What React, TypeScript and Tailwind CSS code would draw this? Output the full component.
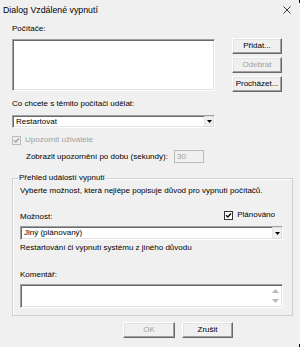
import React from "react";

const sunken =
  "border border-t-[#a0a0a0] border-l-[#a0a0a0] border-b-white border-r-white shadow-[inset_1px_1px_0_#696969,inset_-1px_-1px_0_#e3e3e3] bg-white";

const Button = ({
  label,
  disabled,
  className = "",
}: {
  label: string;
  disabled?: boolean;
  className?: string;
}) => (
  <div
    className={`flex items-center justify-center h-[16px] border border-t-white border-l-white border-b-[#696969] border-r-[#696969] shadow-[inset_-1px_-1px_0_#a0a0a0,inset_1px_1px_0_#e3e3e3] bg-[#f0f0f0] ${
      disabled ? "text-[#a0a0a0]" : "text-black"
    } ${className}`}
  >
    {label}
  </div>
);

const Check = ({ disabled }: { disabled?: boolean }) => (
  <div
    className={`flex items-center justify-center w-[9px] h-[9px] border ${
      disabled ? "border-[#bcbcbc] bg-[#f0f0f0]" : "border-[#333] bg-white"
    }`}
  >
    <svg width="7" height="7" viewBox="0 0 7 7">
      <path
        d="M1 3.2 L2.8 5 L6 1.5"
        fill="none"
        stroke={disabled ? "#a0a0a0" : "#000"}
        strokeWidth="1.3"
      />
    </svg>
  </div>
);

const Select = ({ value, className = "" }: { value: string; className?: string }) => (
  <div className={`flex items-center ${sunken} ${className}`}>
    <span className="flex-1 pl-[3px]">{value}</span>
    <div className="flex items-center justify-center w-[10px] h-full border-l border-l-[#e3e3e3] bg-[#f0f0f0] border border-[#dcdcdc]">
      <svg width="5" height="3" viewBox="0 0 5 3">
        <path d="M0 0 H5 L2.5 3 Z" fill="#000" />
      </svg>
    </div>
  </div>
);

export default function App() {
  return (
    <div className="relative w-[300px] h-[347px] bg-[#f0f0f0] text-[8px] leading-[10px] text-black font-['Liberation_Sans',Arial,sans-serif] overflow-hidden">
      <div className="flex h-[20px] items-center justify-between pl-[3px] pr-[9px]">
        <span className="text-[8.8px]">Dialog Vzdálené vypnutí</span>
        <svg width="8" height="8" viewBox="0 0 8 8">
          <path d="M0.5 0.5 L7.5 7.5 M7.5 0.5 L0.5 7.5" stroke="#222" strokeWidth="0.9" />
        </svg>
      </div>

      <div className="px-[12px]">
        <div className="mt-[4px]">Počítače:</div>
        <div className="mt-[5px] flex items-start">
          <div className={`w-[203px] h-[52px] ${sunken}`} />
          <div className="ml-[17px] -mt-[1px] flex flex-col gap-[3px]">
            <Button label="Přidat..." className="w-[50px]" />
            <Button label="Odebrat" disabled className="w-[50px]" />
            <Button label="Procházet..." className="w-[50px]" />
          </div>
        </div>

        <div className="mt-[7px]">Co chcete s těmito počítači udělat:</div>
        <Select value="Restartovat" className="mt-[6px] w-[203px] h-[13px]" />

        <div className="mt-[7px] flex items-center h-[10px] text-[#a0a0a0]">
          <Check disabled />
          <span className="ml-[4px]">Upozornit uživatele</span>
        </div>
        <div className="mt-[5px] flex items-center h-[13px] pl-[14px]">
          <span className="w-[148px]">Zobrazit upozornění po dobu (sekundy):</span>
          <div className="flex items-center w-[30px] h-[13px] pl-[2px] border border-[#bcbcbc] bg-[#f0f0f0] text-[#a0a0a0]">
            30
          </div>
        </div>

        <div className="relative mt-[15px] w-[281px] h-[138px] border border-[#d0d0d0] shadow-[inset_1px_1px_0_white] pl-[7px] pr-[9px]">
          <span className="absolute -top-[6px] left-[5px] bg-[#f0f0f0] px-[1px]">
            Přehled událostí vypnutí
          </span>
          <div className="mt-[7px]">
            Vyberte možnost, která nejlépe popisuje důvod pro vypnutí počítačů.
          </div>
          <div className="mt-[16px] flex items-center justify-between h-[10px]">
            <span>Možnost:</span>
            <div className="flex items-center -mt-[4px] mr-[8px]">
              <Check />
              <span className="ml-[4px]">Plánováno</span>
            </div>
          </div>
          <Select value="Jiný (plánovaný)" className="mt-[4px] h-[14px]" />
          <div className="mt-[3px]">Restartování či vypnutí systému z jiného důvodu</div>
          <div className="mt-[17px]">Komentář:</div>
          <div className={`mt-[4px] h-[24px] flex justify-end ${sunken}`}>
            <div className="flex flex-col justify-between py-[4px] pr-[3px]">
              <svg width="7" height="4" viewBox="0 0 7 4">
                <path d="M0 4 H7 L3.5 0 Z" fill="#b8b8b8" />
              </svg>
              <svg width="7" height="4" viewBox="0 0 7 4">
                <path d="M0 0 H7 L3.5 4 Z" fill="#b8b8b8" />
              </svg>
            </div>
          </div>
        </div>

        <div className="mt-[6px] ml-[111px] flex gap-[7px]">
          <Button label="OK" disabled className="w-[52px]" />
          <Button label="Zrušit" className="w-[51px]" />
        </div>
      </div>

      <div className="absolute right-0 top-0 w-[1px] h-[3px] bg-black" />
      <div className="absolute right-0 bottom-0 w-[1px] h-[3px] bg-black" />
    </div>
  );
}
